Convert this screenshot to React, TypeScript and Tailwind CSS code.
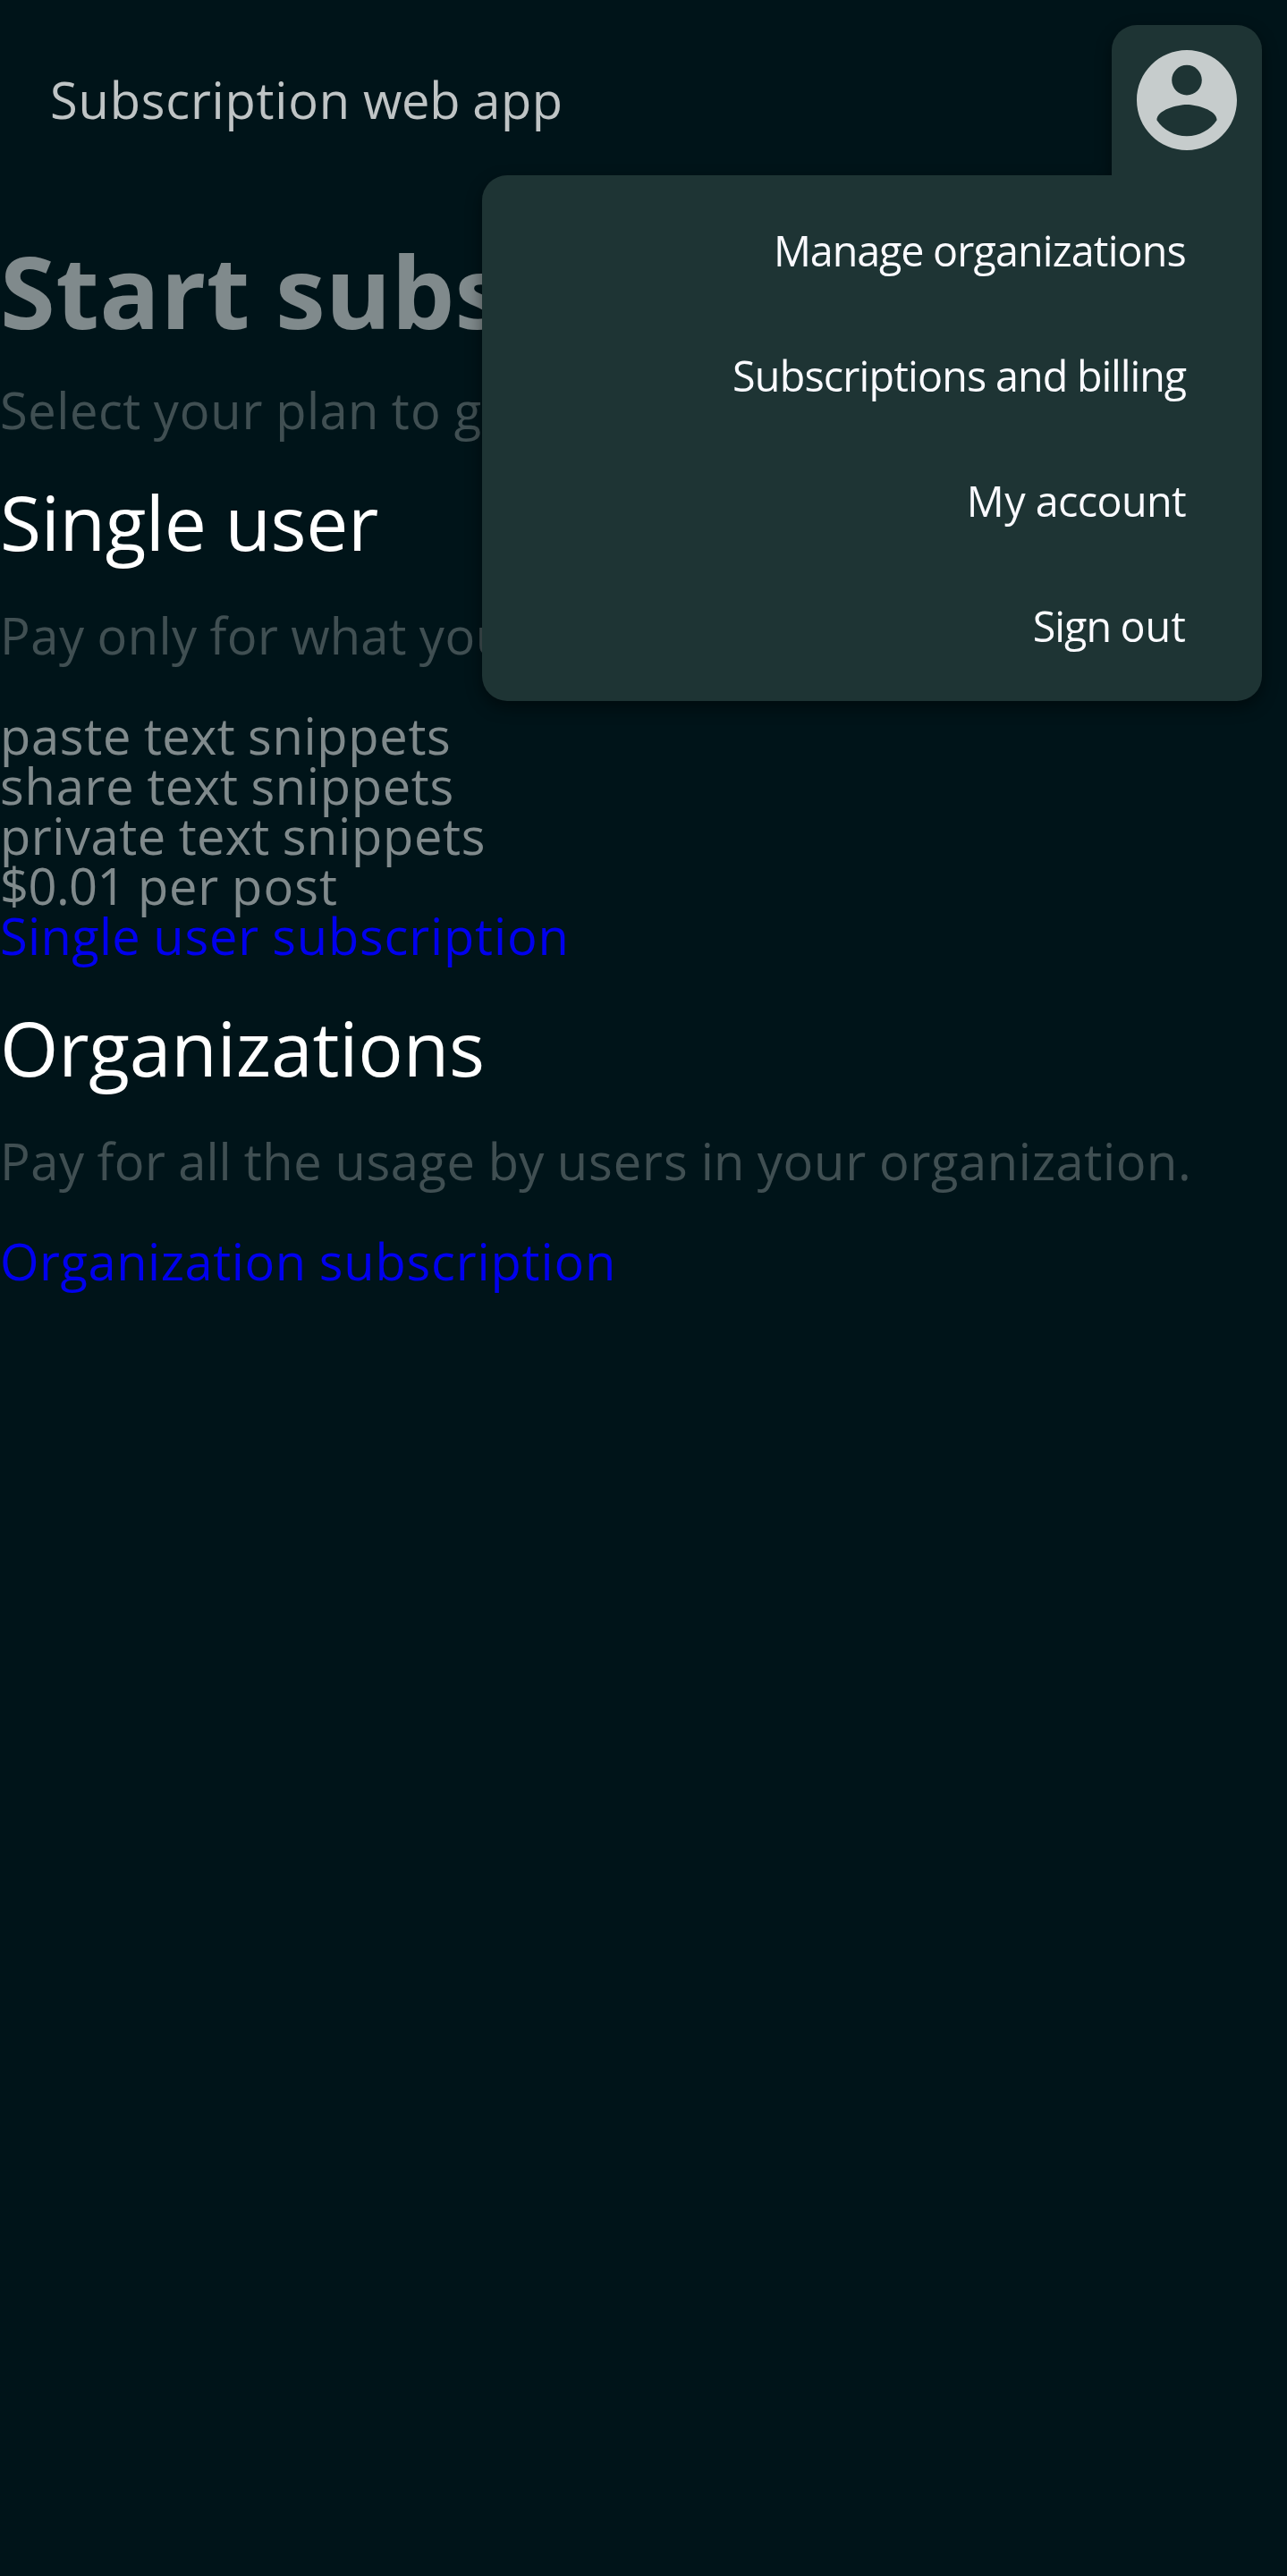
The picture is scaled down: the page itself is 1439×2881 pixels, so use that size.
import React from "react";

const menuItems = ["Manage organizations", "Subscriptions and billing", "My account", "Sign out"];
const features = ["paste text snippets", "share text snippets", "private text snippets", "$0.01 per post"];

// Density of the layout: one design pixel is 3.5 screen pixels.
const DENSITY = 3.5;

// Glyph advances in 1/2048 em.
const REGULAR: Record<string, number> = {
  " ": 532, $: 1169, ".": 545, "0": 1169, "1": 1169, M: 1849, O: 1595, P: 1233, S: 1124,
  a: 1139, b: 1255, c: 975, d: 1255, e: 1149, f: 694, g: 1122, h: 1257, i: 518, l: 518,
  n: 1257, o: 1237, p: 1255, r: 836, s: 977, t: 723, u: 1257, v: 1020, w: 1593, x: 1073, y: 1022, z: 958,
};
const BOLD: Record<string, number> = {
  " ": 532, S: 1128, t: 889, a: 1237, r: 930, u: 1346, b: 1296, s: 1018, c: 1053, i: 625, p: 1296, o: 1268, n: 1346,
};

// Glyphs whose hinted advance differs from plain rounding.
const HINTED: Record<string, number> = { "z@16": 8, "t@24": 9 };

type TextProps = { children: string; size?: number; bold?: boolean };

// Snaps each word's width to whole design pixels per glyph.
function Text({ children, size = 16, bold = false }: TextProps) {
  const table = bold ? BOLD : REGULAR;
  const spacing = (part: string) => {
    let sum = 0;
    for (const ch of part) {
      const advance = ((table[ch] ?? 1100) * size) / 2048;
      sum += (HINTED[`${ch}@${size}`] ?? Math.round(advance)) - advance;
    }
    return `${((sum / part.length) * DENSITY).toFixed(3)}px`;
  };
  return (
    <span className="whitespace-pre">
      {children.split(/( )/).map((part, i) => (
        <span key={i} style={{ letterSpacing: spacing(part) }}>
          {part}
        </span>
      ))}
    </span>
  );
}

function AccountIcon() {
  return (
    <svg viewBox="2 2 20 20" className="size-28 fill-white/75" aria-hidden="true">
      <path d="M12 2C6.48 2 2 6.48 2 12s4.48 10 10 10 10-4.48 10-10S17.52 2 12 2zm0 3c1.66 0 3 1.34 3 3s-1.34 3-3 3-3-1.34-3-3 1.34-3 3-3zm0 14.2c-2.5 0-4.71-1.28-6-3.22.03-1.99 4-3.08 6-3.08 1.99 0 5.97 1.09 6 3.08-1.29 1.94-3.5 3.22-6 3.22z" />
    </svg>
  );
}

function AccountMenu() {
  return (
    <div className="absolute top-7 right-7 z-10 flex flex-col items-end drop-shadow-[0_7px_9px_rgba(0,0,0,0.45)]">
      <button className="rounded-t-[28px] bg-[#1e3434] p-7" aria-label="Account">
        <AccountIcon />
      </button>
      <nav className="flex w-[872px] flex-col rounded-[28px] rounded-tr-none bg-[#1e3434] px-[84px] py-[14px] text-[46.667px] text-[#fafaff]">
        {menuItems.map((item) => (
          <a key={item} href="#" className="flex h-[140px] items-center justify-end pt-px pr-px leading-none">
            <Text size={13.333}>{item}</Text>
          </a>
        ))}
      </nav>
    </div>
  );
}

export default function App() {
  return (
    <div className="relative min-h-[2881px] w-full overflow-hidden bg-[#001419] font-['Open_Sans',sans-serif] text-[56px] leading-none text-white/50 [font-kerning:none]">
      <header className="flex h-56 items-center px-14 pb-0.5 text-white/75">
        <Text>Subscription web app</Text>
      </header>
      <AccountMenu />
      <main>
        <h1 className="mt-[45px] text-[112px] leading-none font-bold">
          <Text size={32} bold>Start subscription</Text>
        </h1>
        <p className="mt-[49px] text-white/25"><Text>Select your plan to get started.</Text></p>
        <h2 className="mt-14 text-[84px] leading-none text-white"><Text size={24}>Single user</Text></h2>
        <p className="my-14 text-white/25"><Text>Pay only for what you use.</Text></p>
        <ul>
          {features.map((f) => (
            <li key={f}><Text>{f}</Text></li>
          ))}
        </ul>
        <a href="#" className="block text-[#0000ee]"><Text>Single user subscription</Text></a>
        <h2 className="mt-14 text-[84px] leading-none text-white"><Text size={24}>Organizations</Text></h2>
        <p className="my-14 text-white/25"><Text>Pay for all the usage by users in your organization.</Text></p>
        <a href="#" className="block text-[#0000ee]"><Text>Organization subscription</Text></a>
      </main>
    </div>
  );
}
